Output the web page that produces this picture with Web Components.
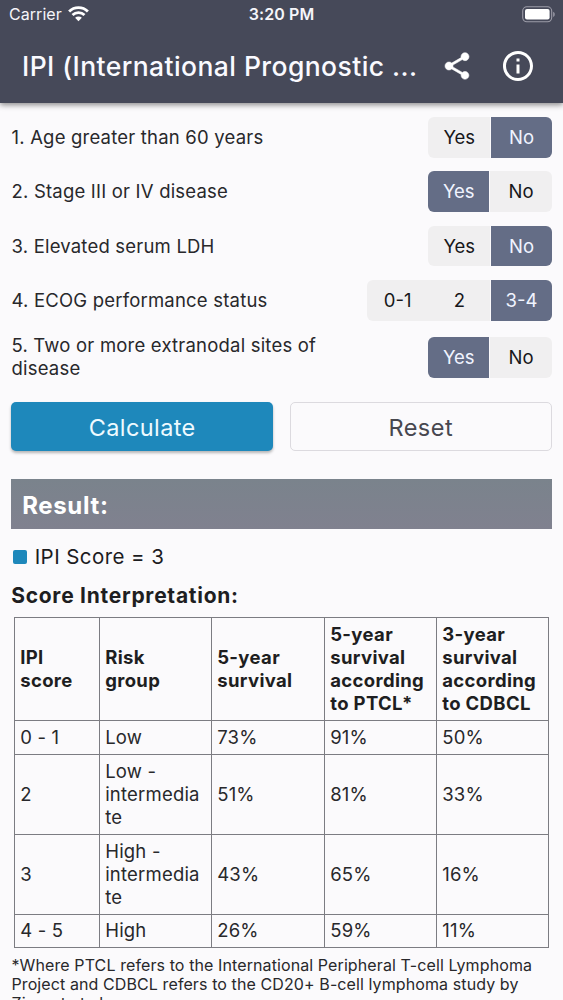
<!DOCTYPE html>
<html lang="en">
<head>
<meta charset="utf-8">
<title>IPI (International Prognostic Index)</title>
<style>
html,body{margin:0;height:100%;overflow:hidden}
body{font-family:Inter,"Liberation Sans",sans-serif;background:#fbfafc;color:#28282b}
</style>
</head>
<body>
<ipi-app></ipi-app>
<script>
function define(name, html, setup) {
  customElements.define(name, class extends HTMLElement {
    constructor() {
      super();
      this.attachShadow({ mode: 'open' });
    }
    connectedCallback() {
      this.shadowRoot.innerHTML = html;
      if (setup) setup(this, this.shadowRoot);
    }
  });
}

define('status-bar', `
<style>
:host{display:grid;grid-template-columns:1fr auto 1fr;align-items:center;height:29px;padding:0 7px 0 9px;color:#f5f5fa;font-size:16px}
.left{display:flex;align-items:center;gap:6px;letter-spacing:.05px}
.time{font-weight:600;letter-spacing:.1px;position:relative;left:-1px}
.left span,.time{margin-top:-1px}
.right{display:flex;justify-content:flex-end}
svg{display:block}
.left svg{margin-top:-2px}
</style>
<div class="left"><span>Carrier</span>
<svg width="21" height="16" viewBox="0 0 21 16" fill="none" stroke="#fff" stroke-width="2.800"><path d="M1.100 5.400a13.400 13.400 0 0 1 18.800 0M4.500 9.100a8.600 8.600 0 0 1 12 0"/><path d="M10.500 15.300l-3.400-3.500a4.900 4.900 0 0 1 6.800 0z" fill="#fff" stroke="none"/></svg></div>
<span class="time">3:20 PM</span>
<div class="right"><svg width="34" height="17" viewBox="0 0 34 17"><rect x=".7" y=".8" width="29" height="15" rx="4.200" fill="none" stroke="#9c9ca8" stroke-width="1.100"/><rect x="3" y="3" width="24.600" height="10.600" rx="2" fill="#fff"/><path d="M31.200 5.700c2 .7 2 4.500 0 5.200z" fill="#9c9ca8"/></svg></div>`);

define('app-header', `
<style>
:host{display:block;height:103px;background:#464959;box-shadow:0 2px 5px rgba(0,0,0,.35),0 1px 8px rgba(0,0,0,.15);position:relative}
.bar{display:flex;align-items:center;height:74px;padding-left:22px}
h1{margin:-1px 0 0;font-size:26.500px;font-weight:500;letter-spacing:.42px;color:#fafaff;white-space:nowrap;width:419px;line-height:36px}
svg{display:block;flex:none}
.info{margin-left:27px}
</style>
<status-bar></status-bar>
<div class="bar"><h1><slot></slot></h1>
<svg width="32" height="32" viewBox="0 0 24 24" fill="#fff"><path d="M18 16.080c-.76 0-1.440.3-1.960.77L8.910 12.700c.05-.23.09-.46.09-.7s-.04-.47-.09-.7l7.050-4.110c.54.5 1.250.81 2.040.81 1.660 0 3-1.340 3-3s-1.340-3-3-3-3 1.340-3 3c0 .24.04.47.09.7L8.040 9.810C7.500 9.310 6.790 9 6 9c-1.660 0-3 1.340-3 3s1.340 3 3 3c.79 0 1.500-.31 2.040-.81l7.120 4.160c-.05.21-.08.43-.08.65 0 1.610 1.310 2.920 2.920 2.920s2.920-1.310 2.920-2.920-1.310-2.920-2.920-2.920z" stroke="#fff" stroke-width=".4"/></svg>
<svg class="info" width="36" height="36" viewBox="0 0 24 24" fill="#fff"><path d="M11 7h2v2h-2zM11 11h2v6h-2zM12 2C6.480 2 2 6.480 2 12s4.480 10 10 10 10-4.480 10-10S17.520 2 12 2zm0 18c-4.410 0-8-3.590-8-8s3.590-8 8-8 8 3.590 8 8-3.590 8-8 8z"/></svg></div>`);

define('segment-toggle', `
<style>
:host{display:flex;border-radius:6px;overflow:hidden;background:#f0eff0;flex:none}
span{width:61.700px;height:40.700px;line-height:40.700px;text-align:center;font-size:18.500px;color:#17171a;box-sizing:border-box}
span.on{background:#646d86;color:#f0f4ff}
span.on:first-of-type{border-right:1px solid #fbfafc}
span.on:last-of-type{border-left:1px solid #fbfafc}
</style>`, (el, root) => {
  el.getAttribute('options').split(',').forEach((label, i) => {
    const s = document.createElement('span');
    s.textContent = label;
    if (i === +el.getAttribute('selected')) s.className = 'on';
    root.append(s);
  });
});

define('question-row', `
<style>
:host{display:flex;align-items:center;justify-content:space-between;height:54.300px}
:host([tall]){height:60px}
p{margin:0 0 0 .3px;width:340px;font-size:18.500px;line-height:23px;letter-spacing:.2px}
</style><p><slot></slot></p><slot name="control"></slot>`);

define('action-button', `
<style>
:host{display:flex;height:49.500px;align-items:center;justify-content:center;box-sizing:border-box;border-radius:5px;font-size:23.500px;letter-spacing:.5px;border:1.300px solid #dcdadf;color:#47474f;padding-top:1px}
:host([primary]){background:#1e88bb;color:#eefaff;border:0;box-shadow:0 2px 3px rgba(0,0,0,.28);letter-spacing:.4px}
</style><slot></slot>`);

define('result-header', `
<style>
:host{display:flex;align-items:center;height:50px;padding-left:11px;background:linear-gradient(#7a838c,#80818f);color:#fff;font-weight:700;font-size:24px;letter-spacing:.65px;box-sizing:border-box;padding-top:2px}
</style><slot></slot>`);

define('score-line', `
<style>
:host{display:flex;align-items:center;gap:8px;font-size:20.500px;line-height:26px;color:#1c1c1f;letter-spacing:.42px}
i{width:13.500px;height:13.500px;border-radius:2px;background:#1e88bb;margin-left:2px}
</style><i></i><span><slot></slot></span>`);

define('risk-table', `
<style>
:host{display:block}
table{border-collapse:collapse;table-layout:fixed;width:535px;margin-left:3px;font-size:18.500px;line-height:23px;letter-spacing:.2px}
th,td{border:1px solid #7c7c82;padding:0 5px 1px;text-align:left;vertical-align:middle;overflow-wrap:anywhere;white-space:pre-line}
td{padding-right:9px}
th{font-weight:700;color:#1e1e21;letter-spacing:.35px}
</style><table><colgroup><col style="width:85px"><col style="width:112px"><col style="width:113px"><col style="width:112px"><col style="width:112px"></colgroup><tbody></tbody></table>`, (el, root) => {
  const rows = [
    [103, 'IPI\nscore', 'Risk\ngroup', '5-year survival', '5-year survival according to PTCL*', '3-year survival according to CDBCL'],
    [34, '0 - 1', 'Low', '73%', '91%', '50%'],
    [80, '2', 'Low - intermediate', '51%', '81%', '33%'],
    [80, '3', 'High - intermediate', '43%', '65%', '16%'],
    [33, '4 - 5', 'High', '26%', '59%', '11%']
  ];
  const body = root.querySelector('tbody');
  rows.forEach(([h, ...cells], r) => {
    const tr = body.insertRow();
    tr.style.height = h + 'px';
    cells.forEach(t => {
      const c = document.createElement(r ? 'td' : 'th');
      c.textContent = t;
      tr.append(c);
    });
  });
});

define('ipi-app', `
<style>
:host{display:block;height:1000px;overflow:hidden}
main{padding:7.300px 11.200px 0 11.200px}
.actions{display:grid;grid-template-columns:1fr 1fr;gap:16.500px;margin:14.500px 0 28px}
score-line{margin-top:14.500px}
h2{margin:12.500px 0 8px;font-size:21px;line-height:27px;font-weight:700;letter-spacing:.73px;color:#1e1e21}
.note{margin:8px 0 0 .3px;font-size:16px;line-height:19px;letter-spacing:.1px;white-space:nowrap}
</style>
<app-header>IPI (International Prognostic ...</app-header>
<main>
<question-row>1. Age greater than 60 years<segment-toggle slot="control" options="Yes,No" selected="1"></segment-toggle></question-row>
<question-row>2. Stage III or IV disease<segment-toggle slot="control" options="Yes,No" selected="0"></segment-toggle></question-row>
<question-row>3. Elevated serum LDH<segment-toggle slot="control" options="Yes,No" selected="1"></segment-toggle></question-row>
<question-row>4. ECOG performance status<segment-toggle slot="control" options="0-1,2,3-4" selected="2"></segment-toggle></question-row>
<question-row tall>5. Two or more extranodal sites of disease<segment-toggle slot="control" options="Yes,No" selected="0"></segment-toggle></question-row>
<div class="actions"><action-button primary>Calculate</action-button><action-button>Reset</action-button></div>
<result-header>Result:</result-header>
<score-line>IPI Score = 3</score-line>
<h2>Score Interpretation:</h2>
<risk-table></risk-table>
<p class="note">*Where PTCL refers to the International Peripheral T-cell Lymphoma<br>Project and CDBCL refers to the CD20+ B-cell lymphoma study by<br>Ziepert et al.</p>
</main>`);
</script>
</body>
</html>
